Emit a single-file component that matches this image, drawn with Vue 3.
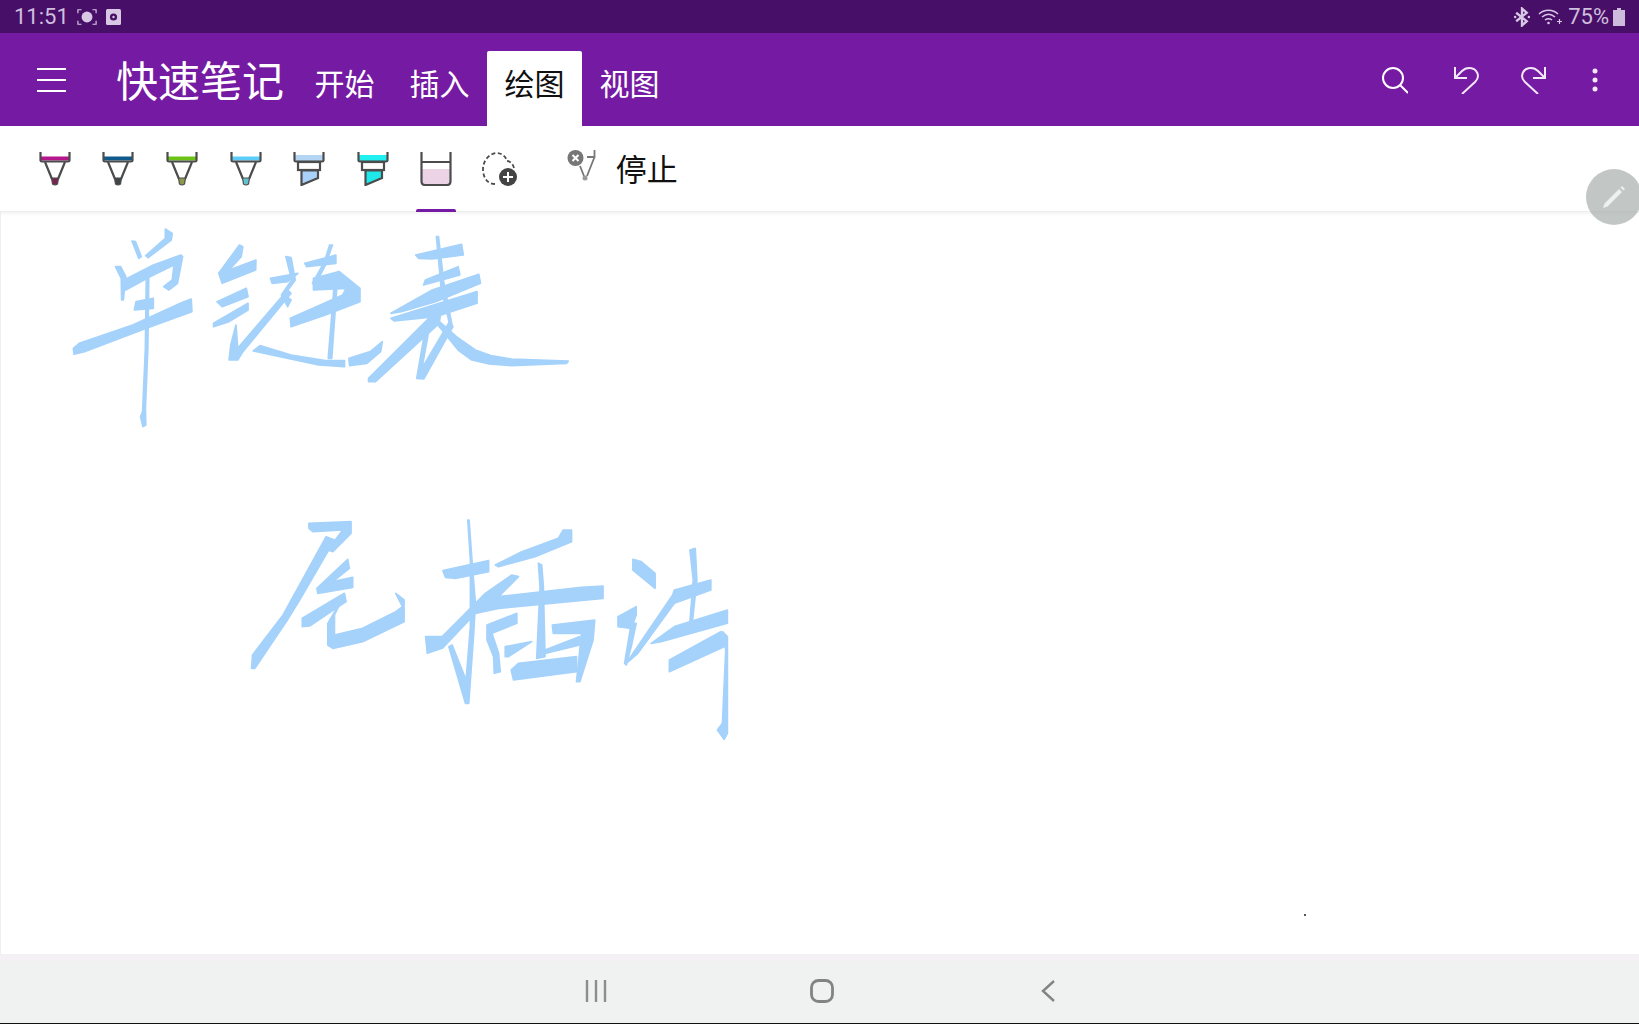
<script setup>
const tabs = [
  { label: '开始' },
  { label: '插入' },
  { label: '绘图', active: true },
  { label: '视图' }
]
const pens = [
  { kind: 'pen', band: '#b5168c', tip: '#7a2450' },
  { kind: 'pen', band: '#0f5a8c', tip: '#3f4548' },
  { kind: 'pen', band: '#6cc316', tip: '#8b9a4a' },
  { kind: 'pen', band: '#5ccdf8', tip: '#62c3cf' },
  { kind: 'marker', band: '#b5d5f5', tip: '#a8d2fb' },
  { kind: 'marker', band: '#21f0f0', tip: '#1fe8ea' },
  { kind: 'bucket', active: true }
]
const inkTop = [
  '190,155 205,155 220,185 213,255 208,255 207,190',
  '238,78 248,80 265,125 258,130',
  '335,42 355,55 352,75 285,128 278,122 335,70',
  '215,195 300,150 380,120 385,125 370,205 345,225 330,215 355,195 360,150 290,185 220,225',
  '250,260 300,250 300,280 245,285',
  '68,400 85,385 240,330 385,262 410,252 412,290 280,340 100,410 70,418',
  '280,165 287,165 284,400 277,580 278,630 270,635 263,605 269,590 277,400',
  '490,175 550,90 560,95 555,125 520,165 598,135 597,165 500,205',
  '485,260 570,220 575,245 500,275',
  '475,325 575,265 575,285 520,320 475,335',
  '540,330 525,390 520,435 545,435 560,410 700,235 690,225 545,400',
  '610,392 700,420 800,437 855,437 855,455 780,450 590,408',
  '640,190 720,175 690,200 645,205',
  '685,125 700,128 712,195 680,240 700,255 690,275 672,240 702,195',
  '740,145 815,125 830,120 830,145 745,155',
  '812,90 820,90 800,150 770,210 762,205 797,140',
  '765,190 840,170 900,220 900,260 800,300 700,335 698,310 850,240 860,220 765,225',
  '836,170 818,430 808,430 826,200',
  '868,430 930,410 965,380 960,410 920,445 870,452',
  '1122,65 1128,65 1143,200 1168,335 1162,335 1136,220',
  '1062,120 1195,88 1200,120 1110,132 1070,130',
  '1090,195 1185,155 1190,180 1085,210',
  '990,295 1110,225 1245,178 1250,205 1120,260 1020,290',
  '990,310 1240,230 1240,265 1120,305 1000,318',
  '925,490 1100,310 1135,290 1130,325 945,500 925,500',
  '1110,310 1120,310 1180,365 1235,405 1280,422 1340,432 1505,438 1500,445 1340,452 1275,447 1225,435 1185,405 1150,360',
  '1090,340 1065,490 1085,492 1170,335 1160,320 1080,460 1100,345'
]
const inkBottom = [
  '238,70 365,65 365,100 310,155 295,150 340,90 250,95 238,85',
  '290,110 315,120 210,300 170,365 75,505 65,505 68,465 160,345',
  '262,265 355,178 360,205 310,245 370,232 370,262 265,280',
  '218,355 345,280 350,305 240,378 218,380',
  '345,285 315,345 315,405 400,385 500,335 520,320 500,280 525,300 525,365 400,425 310,445 295,435 295,370',
  '642,212 780,182 780,215 680,235 650,232',
  '717,60 721,60 730,185 740,310 735,400 720,610 710,610 660,440 670,435 712,540 725,380 725,180',
  '800,195 880,155 990,115 1005,90 1030,90 1030,125 920,170 810,200',
  '590,410 640,410 770,280 850,225 870,230 810,290 1060,262 1125,258 1125,295 810,325 740,340 640,445 595,460',
  '930,190 940,195 945,260 950,470 925,475 935,260',
  '775,375 865,340 865,370 790,400 810,460 815,515 797,520 795,470 775,420',
  '830,440 910,425 840,470 830,470',
  '972,375 1100,360 1095,420 1055,545 1045,545 1060,400 975,400',
  '870,490 1045,470 1045,515 855,540 848,510',
  '950,450 1055,410 1055,435 950,460',
  '1215,178 1240,185 1282,220 1282,265 1215,210',
  '1170,350 1225,320 1225,345 1210,385 1170,380',
  '1210,370 1225,370 1210,440 1195,495 1190,490',
  '1195,490 1335,285 1340,270 1450,240 1450,270 1340,310 1230,460',
  '1387,150 1403,145 1408,240 1395,360 1387,365 1397,240',
  '1270,430 1340,380 1500,330 1500,370 1300,425',
  '1325,480 1480,395 1490,440 1325,515',
  '1485,395 1500,410 1500,700 1490,718 1470,690 1485,670 1495,450'
]
</script>

<template>
  <div class="screen">
    <header class="status">
      <span class="time">11:51</span>
      <svg class="st-shot" width="20" height="18" viewBox="0 0 22 18">
        <path d="M1 5V1H5M17 1H21V5M21 13V17H17M5 17H1V13" fill="none" stroke="#d8c8e4" stroke-width="1.3" />
        <circle cx="11" cy="9" r="6" fill="#d8c8e4" />
      </svg>
      <svg class="st-rec" width="15" height="16" viewBox="0 0 15 16">
        <rect width="15" height="16" rx="1.5" fill="#d8c8e4" />
        <circle cx="7.5" cy="8" r="3.6" fill="#4a1166" />
        <circle cx="7.5" cy="8" r="1.2" fill="#d8c8e4" />
      </svg>
      <span class="spring"></span>
      <svg width="18" height="20" viewBox="0 0 17 18">
        <path d="M3 5L13 13L8.5 17V1L13 5L3 13" fill="none" stroke="#d8c8e4" stroke-width="2.200" />
        <circle cx="2" cy="9" r="1.200" fill="#d8c8e4" /><circle cx="15" cy="9" r="1.200" fill="#d8c8e4" />
      </svg>
      <svg class="st-wifi" width="24" height="16" viewBox="0 0 24 16">
        <path d="M1 5C6 0 15 0 20 5M4 8C8 4.500 13 4.500 17 8M7 11C9 9.500 12 9.500 14 11" fill="none" stroke="#d8c8e4" stroke-width="1.5" />
        <circle cx="10.500" cy="14" r="1.300" fill="#d8c8e4" />
        <path d="M19 12.500H24M21.500 10V15" stroke="#d8c8e4" stroke-width="1.200" />
      </svg>
      <span class="pct">75%</span>
      <svg class="st-batt" width="12" height="18" viewBox="0 0 12 18">
        <path d="M4 0H8V2H12V18H0V2H4Z" fill="#cdbcdb" />
      </svg>
    </header>

    <nav class="appbar">
      <button class="menu" aria-label="menu"><i></i><i></i><i></i></button>
      <h1 class="title">快速笔记</h1>
      <div class="tabs">
        <div v-for="t in tabs" :key="t.label" class="tab" :class="{ on: t.active }">{{ t.label }}</div>
      </div>
      <div class="actions">
        <svg class="search" width="26" height="28" viewBox="0 0 26 28" fill="none" stroke="#fff" stroke-width="2">
          <circle cx="11" cy="12" r="10" /><path d="M18.500 19.500L26 27" />
        </svg>
        <svg width="26" height="28" viewBox="0 0 26 28" fill="none" stroke="#f4e8f8" stroke-width="2">
          <path d="M2 1V12H14M2 12L9 5C14 0 24 1 25 10C25 13 24 14 22 16L9 28" />
        </svg>
        <svg width="26" height="28" viewBox="0 0 26 28" fill="none" stroke="#f4e8f8" stroke-width="2">
          <path d="M24 1V12H12M24 12L17 5C12 0 2 1 1 10C1 13 2 14 4 16L17 28" />
        </svg>
        <svg class="dots" width="6" height="24" viewBox="0 0 6 24" fill="#f4e8f8">
          <circle cx="3" cy="3" r="2.500" /><circle cx="3" cy="12" r="2.500" /><circle cx="3" cy="21" r="2.500" />
        </svg>
      </div>
    </nav>

    <section class="toolbar">
      <div v-for="(p, i) in pens" :key="i" class="tool" :class="{ on: p.active }">
        <svg width="32" height="34" viewBox="0 0 32 34" fill="none" stroke="#4c4c4c" stroke-width="2.200">
          <template v-if="p.kind === 'pen'">
            <rect x="2" y="4.500" width="28" height="4" :fill="p.band" stroke="none" />
            <path d="M1.500 0V8.500Q1.500 9.500 3 9.500H29Q30.500 9.500 30.500 8.500V0" />
            <path d="M6 10L13 27M26 10L19 27" />
            <path d="M12.500 26H19.500L18.500 32Q16 34 13.500 32Z" :fill="p.tip" stroke="#4c4c4c" stroke-width="1.200" />
          </template>
          <template v-else-if="p.kind === 'marker'">
            <rect x="2" y="3" width="28" height="6" :fill="p.band" stroke="none" />
            <path d="M1.500 0V8.500Q1.500 9.500 3 9.500H29Q30.500 9.500 30.500 8.500V0" />
            <rect x="5" y="10" width="22" height="8" fill="#fff" />
            <path d="M8.500 18.500H25V26L8.500 33Z" :fill="p.tip" />
          </template>
          <template v-else>
            <path d="M2 17H30V30Q30 33 27 33H5Q2 33 2 30Z" fill="#ecd3e6" stroke="none" />
            <path d="M1.500 0V29Q1.500 33 5 33H27Q30.500 33 30.500 29V0M1.500 10H30.500" />
          </template>
        </svg>
      </div>
      <div class="tool">
        <svg width="36" height="34" viewBox="0 0 36 34" fill="none">
          <path d="M13 32C5 32 1 25 1 17C1 8 8 1 15 1C20 1 24 5 25 9C28 9 31 12 32 16" stroke="#4c4c4c" stroke-width="1.800" stroke-dasharray="4 2.500" />
          <circle cx="26" cy="25" r="9" fill="#444" />
          <path d="M21 25H31M26 20V30" stroke="#fff" stroke-width="2" />
        </svg>
      </div>
      <button class="stop">
        <svg width="32" height="34" viewBox="0 0 32 34" fill="none">
          <path d="M20 8H27.500V1M27.500 8L20 27M13 17L17 27" stroke="#777" stroke-width="1.800" />
          <circle cx="18" cy="29" r="2.500" fill="#999" />
          <circle cx="8.500" cy="9" r="8" fill="#777" />
          <path d="M5.500 6L11.500 12M11.500 6L5.500 12" stroke="#fff" stroke-width="2" />
        </svg>
        <span>停止</span>
      </button>
    </section>

    <main class="canvas">
      <svg class="ink" viewBox="0 212 1639 742" width="1639" height="742">
        <g transform="translate(50 215) scale(.3444 .3333)" fill="#a5d2fb" stroke="#a5d2fb" stroke-width="5" stroke-linejoin="round">
          <polygon v-for="(p, i) in inkTop" :key="i" :points="p" />
        </g>
        <g transform="translate(230 500) scale(.3316 .3333)" fill="#a5d2fb" stroke="#a5d2fb" stroke-width="5" stroke-linejoin="round">
          <polygon v-for="(p, i) in inkBottom" :key="i" :points="p" />
        </g>
        <rect x="1304" y="914" width="2" height="2" fill="#555" />
      </svg>
    </main>

    <footer class="navbar">
      <svg width="22" height="22" viewBox="0 0 22 22" stroke="#8a8f8d" stroke-width="2.400">
        <path d="M2 0V22M11 0V22M20 0V22" />
      </svg>
      <svg width="24" height="24" viewBox="0 0 24 24" fill="none" stroke="#808583" stroke-width="2.800">
        <rect x="1.500" y="1.500" width="21" height="21" rx="7" />
      </svg>
      <svg width="14" height="22" viewBox="0 0 14 22" fill="none" stroke="#808583" stroke-width="2.400">
        <path d="M13 1L2 11L13 21" />
      </svg>
    </footer>

    <button class="fab" aria-label="pen">
      <svg width="24" height="24" viewBox="0 0 24 24" fill="#eef0ee">
        <path d="M1 23L2.500 18.500L17 4L20 7L5.500 21.500ZM18.500 2.500L20 1L23 4L21.500 5.500Z" />
      </svg>
    </button>
  </div>
</template>

<style>
html, body { margin: 0; background: #fff; }
</style>

<style scoped>
.screen {
  position: relative;
  width: 1639px;
  height: 1024px;
  overflow: hidden;
  display: flex;
  flex-direction: column;
  background: #fff;
  font-family: "Noto Sans CJK SC", "Noto Sans", sans-serif;
}
.status {
  height: 33px;
  flex: none;
  display: flex;
  align-items: center;
  padding: 0 14px;
  background: #470f68;
  color: #d0bfde;
  font-family: Roboto, "Liberation Sans", sans-serif;
  font-size: 22px;
}
.time { width: 63px; line-height: 30px; }
.st-rec { margin-left: 9px; }
.spring { flex: 1; }
.st-wifi { margin-left: 7px; }
.pct { margin-left: 6px; }
.st-batt { margin-left: 4px; }
.appbar {
  height: 93px;
  flex: none;
  display: flex;
  align-items: stretch;
  background: #751ba3;
  color: #fff;
}
.menu {
  width: 29px;
  margin-left: 37px;
  padding: 0;
  border: 0;
  background: none;
  display: flex;
  flex-direction: column;
  justify-content: center;
  gap: 9px;
}
.menu i { display: block; height: 2px; background: #fff; }
.title {
  margin: -1px 13px 0 50px;
  font-size: 42px;
  font-weight: 400;
  line-height: 93px;
  white-space: nowrap;
}
.tabs { display: flex; align-self: flex-end; }
.tab {
  width: 95px;
  height: 75px;
  line-height: 62px;
  font-size: 30px;
  font-weight: 400;
  text-align: center;
  border-radius: 2px 2px 0 0;
}
.tab.on { background: #fff; color: #111; }
.actions {
  margin-left: auto;
  padding-right: 41px;
  display: flex;
  align-items: center;
  gap: 42px;
}
.search { margin-right: 3px; }
.dots { margin-left: 3px; }
.toolbar {
  height: 86px;
  flex: none;
  box-sizing: border-box;
  padding-left: 23px;
  display: flex;
  align-items: stretch;
  background: #fff;
  border-bottom: 1px solid #eee;
  box-shadow: 0 2px 3px rgba(0, 0, 0, .05);
  position: relative;
}
.tool {
  position: relative;
  width: 63.600px;
  display: flex;
  justify-content: center;
  padding-top: 26px;
  box-sizing: border-box;
}
.tool.on::after {
  content: "";
  position: absolute;
  left: 11.800px;
  right: 11.800px;
  bottom: -1px;
  height: 3.500px;
  border-radius: 2px 2px 0 0;
  background: #751ba3;
}
.stop {
  margin-left: 35px;
  padding: 0;
  border: 0;
  background: none;
  display: flex;
  align-items: flex-start;
  gap: 17px;
  padding-top: 23px;
  font: inherit;
  font-size: 31px;
  font-weight: 400;
  line-height: 38px;
  color: #111;
}
.canvas {
  flex: 1;
  min-height: 0;
  border-left: 1px solid #f0f0f0;
}
.ink { display: block; margin-left: -1px; filter: blur(.4px); }
.navbar {
  height: 70px;
  flex: none;
  box-sizing: border-box;
  display: grid;
  grid-template-columns: 226px 226px 226px;
  padding-left: 483px;
  padding-bottom: 2px;
  justify-items: center;
  align-items: center;
  background: #eff2f0;
  border-top: 7px solid #f4f0f5;
  border-bottom: 1px solid #111;
}
.fab {
  position: absolute;
  left: 1586px;
  top: 169px;
  width: 56px;
  height: 56px;
  padding: 0;
  border: 0;
  border-radius: 50%;
  background: rgba(170, 178, 174, .72);
  display: flex;
  align-items: center;
  justify-content: center;
}
</style>
